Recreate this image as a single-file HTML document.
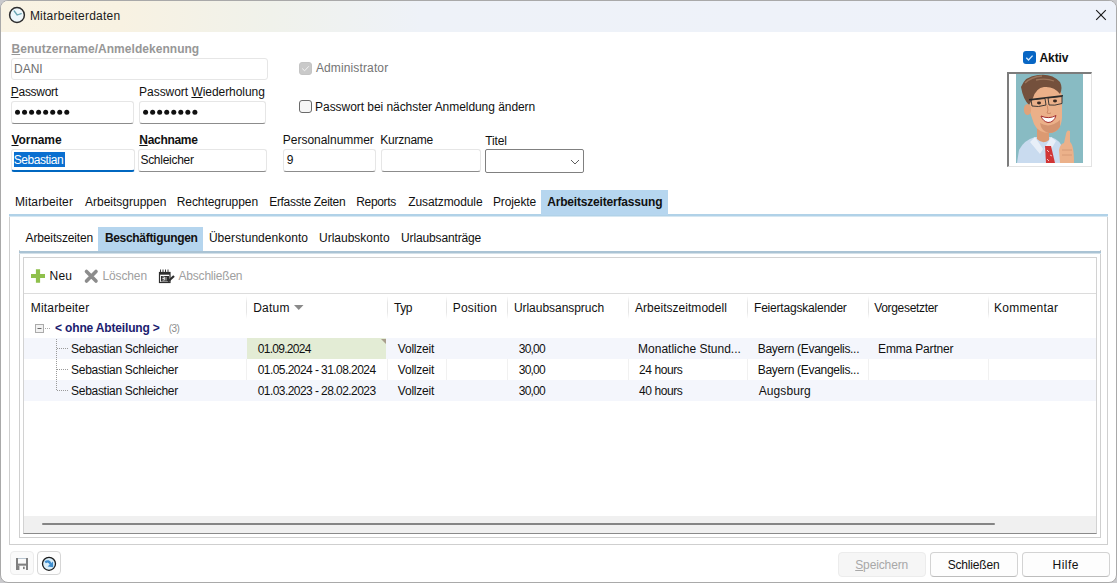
<!DOCTYPE html>
<html><head><meta charset="utf-8">
<style>
*{box-sizing:border-box;margin:0;padding:0}
html,body{width:1117px;height:583px;overflow:hidden;background:#fff}
body{font-family:"Liberation Sans",sans-serif;font-size:12px;color:#1a1a1a;position:relative}
.a{position:absolute;white-space:pre;line-height:1;z-index:5}
.a u{text-decoration:underline;text-underline-offset:1px;text-decoration-thickness:1px}
.r{position:absolute}
svg{position:absolute;overflow:visible}
</style></head><body>
<!-- window frame -->
<div class="r" style="left:0;top:0;width:1117px;height:583px;background:#c9c9cc"></div>
<div class="r" style="left:0;top:0;width:1117px;height:583px;background:#fff;border:1px solid #a9a9a9;border-radius:8px;overflow:hidden">
  <div class="r" style="left:0;top:0;width:1117px;height:31px;background:linear-gradient(90deg,#f9f3e3 0px,#f8f2e2 120px,#f0f2eb 270px,#eef2f8 420px,#eef2fa 1117px)"></div>
</div>
<!-- clock icon -->
<svg style="left:0;top:0" width="40" height="31">
  <circle cx="17" cy="15" r="7.4" fill="#eef7fb" stroke="#2d2d2d" stroke-width="1.5"/>
  <path d="M14.2 11 L17.2 15 L21.2 13.6" fill="none" stroke="#6aa6b4" stroke-width="1.3" stroke-linecap="round" stroke-linejoin="round"/>
</svg>
<!-- close -->
<svg style="left:0;top:0" width="1117" height="31">
  <path d="M1096.2 10.2 L1105.8 19.8 M1105.8 10.2 L1096.2 19.8" stroke="#1a1a1a" stroke-width="1.15"/>
</svg>

<!-- DANI box (disabled) -->
<div class="r" style="left:11px;top:58px;width:257px;height:22px;border:1px solid #e6e6e6;border-radius:3px;background:#fff"></div>
<!-- password boxes -->
<div class="r" style="left:11px;top:101px;width:123px;height:23px;border:1px solid #e6e6e6;border-bottom-color:#8c8c8c;border-radius:3px;background:#fff"></div>
<div class="r" style="left:139px;top:101px;width:127px;height:23px;border:1px solid #e6e6e6;border-bottom-color:#8c8c8c;border-radius:3px;background:#fff"></div>
<svg style="left:0;top:0" width="300" height="130"><circle cx="17.50" cy="112.3" r="2.5" fill="#111"/><circle cx="24.54" cy="112.3" r="2.5" fill="#111"/><circle cx="31.58" cy="112.3" r="2.5" fill="#111"/><circle cx="38.62" cy="112.3" r="2.5" fill="#111"/><circle cx="45.66" cy="112.3" r="2.5" fill="#111"/><circle cx="52.70" cy="112.3" r="2.5" fill="#111"/><circle cx="59.74" cy="112.3" r="2.5" fill="#111"/><circle cx="66.78" cy="112.3" r="2.5" fill="#111"/><circle cx="145.60" cy="112.3" r="2.5" fill="#111"/><circle cx="152.64" cy="112.3" r="2.5" fill="#111"/><circle cx="159.68" cy="112.3" r="2.5" fill="#111"/><circle cx="166.72" cy="112.3" r="2.5" fill="#111"/><circle cx="173.76" cy="112.3" r="2.5" fill="#111"/><circle cx="180.80" cy="112.3" r="2.5" fill="#111"/><circle cx="187.84" cy="112.3" r="2.5" fill="#111"/><circle cx="194.88" cy="112.3" r="2.5" fill="#111"/></svg>
<!-- Vorname -->
<div class="r" style="left:11px;top:149px;width:124px;height:23px;border:1px solid #e6e6e6;border-bottom:2px solid #0067c0;border-radius:3px;background:#fff"></div>
<div class="r" style="left:14px;top:152px;width:51px;height:15px;background:#0a6fd0"></div>
<div class="r" style="left:138px;top:149px;width:129px;height:23px;border:1px solid #e6e6e6;border-bottom-color:#8c8c8c;border-radius:3px;background:#fff"></div>
<!-- Personalnummer, Kurzname -->
<div class="r" style="left:283px;top:149px;width:93px;height:23px;border:1px solid #e6e6e6;border-bottom-color:#8c8c8c;border-radius:3px;background:#fff"></div>
<div class="r" style="left:381px;top:149px;width:100px;height:23px;border:1px solid #e6e6e6;border-bottom-color:#8c8c8c;border-radius:3px;background:#fff"></div>
<!-- Titel combo -->
<div class="r" style="left:485px;top:149px;width:99px;height:24px;border:1px solid #808080;border-radius:2px;background:#fff"></div>
<svg style="left:0;top:0" width="600" height="180">
  <path d="M571 160 L575 164 L579 160" fill="none" stroke="#555" stroke-width="0.95"/>
</svg>
<!-- checkboxes -->
<div class="r" style="left:299px;top:62px;width:13px;height:13px;border-radius:3px;background:#c9c9c9;border:1px solid #c4c4c4"></div>
<svg style="left:0;top:0" width="600" height="180">
  <path d="M302.2 68.5 L304.6 70.8 L308.8 66.3" fill="none" stroke="#f4f4f4" stroke-width="1"/>
</svg>
<div class="r" style="left:299px;top:100px;width:13px;height:13px;border-radius:3px;background:#f6f6f6;border:1px solid #6a6a6a"></div>
<div class="r" style="left:1023px;top:51px;width:13px;height:13px;border-radius:3px;background:#0866c4"></div>
<svg style="left:0;top:0" width="1117" height="180">
  <path d="M1026.3 57.8 L1028.5 60 L1032.6 55.6" fill="none" stroke="#d8ecff" stroke-width="1.3"/>
</svg>
<!-- photo -->
<div class="r" style="left:1007px;top:72px;width:85px;height:95px;background:#fff;border-top:2px solid #7c7c7c;border-left:2px solid #7c7c7c;border-right:1px solid #e3e3e3;border-bottom:1px solid #e3e3e3"></div>
<svg style="left:1016px;top:74px" width="67" height="89" viewBox="0 0 67 89">
  <rect x="0" y="0" width="67" height="89" fill="#88bbc3"/>
  <path d="M1 89 L3 76 Q8 66 19 63 L35 63 Q45 66 47 76 L48 89 Z" fill="#c9dbef"/>
  <path d="M19 63 L27 75 L24 80 L14 68 Z M35 63 L28 75 L33 79 L40 67 Z" fill="#e8eff8"/>
  <path d="M21 52 L33 54 L33 66 Q27 71 21 65 Z" fill="#dc9a72"/>
  <path d="M29 72 L35 72 L39 89 L30 89 Z" fill="#d13535"/>
  <path d="M31 76 l2 2 M34 81 l2 1 M31 85 l2 2" stroke="#f2c2c2" stroke-width="1"/>
  <path d="M13 22 Q14 10 28 9 Q44 8 46 22 L46 44 Q45 58 34 59 Q22 59 18 50 L14 38 Z" fill="#ebb089"/>
  <path d="M24 49 Q34 55 44 46 L44 53 Q40 59 33 59 Q25 57 24 49 Z" fill="#d49470"/>
  <path d="M5 13 Q9 2 22 1 Q36 -1 44 8 Q47 14 44 20 Q38 12 28 13 Q20 14 17 24 L13 31 Q7 25 5 13 Z" fill="#74503c"/>
  <path d="M9 9 Q15 3 26 2 M20 6 Q30 4 38 7" fill="none" stroke="#9c765c" stroke-width="1.3"/>
  <ellipse cx="11.5" cy="35.5" rx="3.6" ry="5.6" fill="#e0a27a"/>
  <ellipse cx="23" cy="29" rx="2" ry="1.4" fill="#3b2a22"/>
  <ellipse cx="39" cy="27" rx="2" ry="1.4" fill="#3b2a22"/>
  <path d="M15 26 L29 24.5 L30 31 Q22 33.5 16 32 Z M32 24 L46 22.5 L46 29.5 Q38 32 33 31 Z" fill="none" stroke="#2d2d2d" stroke-width="0.9"/>
  <path d="M13 25.8 L47 21.8" stroke="#2a2a2a" stroke-width="1.6"/>
  <path d="M31 31 Q33 37 31 39 Q33 40 35 39" fill="none" stroke="#c98662" stroke-width="0.9"/>
  <path d="M25 42 Q33 45.5 40 41.5 Q38 48.5 32 48.5 Q27 47.5 25 42 Z" fill="#fff" stroke="#a43030" stroke-width="1"/>
  <path d="M44 89 L43 76 Q44 70 48 69 L50 60 Q51 55 54 57 L54 68 Q58 71 58 89 Z" fill="#ebb18a"/>
  <path d="M46 76 H56 M46 81 H56" stroke="#d09472" stroke-width="0.8"/>
</svg>

<!-- outer tab panel -->
<div class="r" style="left:9px;top:214px;width:1099px;height:331px;border:1px solid #cfcfcf;border-top:0;background:#fff"></div>
<div class="r" style="left:9px;top:214px;width:1099px;height:2px;background:#b1d2e8"></div><div class="r" style="left:9px;top:216px;width:1099px;height:1px;background:#d6e7f2"></div>
<div class="r" style="left:541px;top:190px;width:127px;height:25px;background:#b6d6ef"></div>
<!-- inner tab panel -->
<div class="r" style="left:19px;top:250px;width:1082px;height:288px;border:1px solid #cfcfcf;border-top:0;background:#fff"></div>
<div class="r" style="left:19px;top:251px;width:1082px;height:2px;background:#aac3d4"></div><div class="r" style="left:19px;top:253px;width:1082px;height:1px;background:#d3e0e8"></div>
<div class="r" style="left:98px;top:227px;width:105px;height:24px;background:#b5d5ee"></div>
<!-- grid -->
<div class="r" style="left:23px;top:257px;width:1074px;height:277px;border:1px solid #d2d2d2;border-bottom-color:#8a8a8a;background:#fff"></div>
<div class="r" style="left:24px;top:293px;width:1072px;height:1px;background:#dcdcdc"></div>
<!-- toolbar icons -->
<svg style="left:0;top:0" width="300" height="300">
  <path d="M38 269.2 V282.8 M31 276 H45" stroke="#8fc04c" stroke-width="4.2"/>
  <path d="M86.5 271.5 L96 281 M96 271.5 L86.5 281" stroke="#8c8c8c" stroke-width="3.6" stroke-linecap="round"/>
  <path d="M160.5 269.5 v3 M163 269.5 v3 M165.5 269.5 v3 M168 269.5 v3" stroke="#3a3a3a" stroke-width="1"/>
  <rect x="159.5" y="272.5" width="10.5" height="10" fill="#fff" stroke="#2e2e2e" stroke-width="1.2"/>
  <rect x="159.5" y="272.5" width="10.5" height="2.2" fill="#2e2e2e"/>
  <rect x="161" y="276" width="8" height="5.5" fill="#2e2e2e"/>
  <path d="M162.5 277 h2 v1.6 h-2 M162.5 278.6 h2 v1.6 h-2 M166 277 v3.6" fill="none" stroke="#fff" stroke-width="0.7"/>
  <path d="M168 281.5 L174 276" stroke="#2e2e2e" stroke-width="2.2"/>
</svg>
<!-- header separators -->
<div class="r" style="left:246px;top:296px;width:1px;height:23px;background:linear-gradient(#fff,#e6e6e6 30%,#e6e6e6 70%,#fff)"></div><div class="r" style="left:387px;top:296px;width:1px;height:23px;background:linear-gradient(#fff,#e6e6e6 30%,#e6e6e6 70%,#fff)"></div><div class="r" style="left:446px;top:296px;width:1px;height:23px;background:linear-gradient(#fff,#e6e6e6 30%,#e6e6e6 70%,#fff)"></div><div class="r" style="left:507px;top:296px;width:1px;height:23px;background:linear-gradient(#fff,#e6e6e6 30%,#e6e6e6 70%,#fff)"></div><div class="r" style="left:628px;top:296px;width:1px;height:23px;background:linear-gradient(#fff,#e6e6e6 30%,#e6e6e6 70%,#fff)"></div><div class="r" style="left:747px;top:296px;width:1px;height:23px;background:linear-gradient(#fff,#e6e6e6 30%,#e6e6e6 70%,#fff)"></div><div class="r" style="left:868px;top:296px;width:1px;height:23px;background:linear-gradient(#fff,#e6e6e6 30%,#e6e6e6 70%,#fff)"></div><div class="r" style="left:988px;top:296px;width:1px;height:23px;background:linear-gradient(#fff,#e6e6e6 30%,#e6e6e6 70%,#fff)"></div><div class="r" style="left:246px;top:359px;width:1px;height:21px;background:#f1f1f1"></div><div class="r" style="left:387px;top:359px;width:1px;height:21px;background:#f1f1f1"></div><div class="r" style="left:446px;top:359px;width:1px;height:21px;background:#f1f1f1"></div><div class="r" style="left:507px;top:359px;width:1px;height:21px;background:#f1f1f1"></div><div class="r" style="left:628px;top:359px;width:1px;height:21px;background:#f1f1f1"></div><div class="r" style="left:747px;top:359px;width:1px;height:21px;background:#f1f1f1"></div><div class="r" style="left:868px;top:359px;width:1px;height:21px;background:#f1f1f1"></div><div class="r" style="left:988px;top:359px;width:1px;height:21px;background:#f1f1f1"></div>
<!-- rows -->
<div class="r" style="left:24px;top:338px;width:1072px;height:21px;background:#f4f6fc"></div>
<div class="r" style="left:24px;top:380px;width:1072px;height:21px;background:#f4f6fc"></div>
<div class="r" style="left:247px;top:338px;width:139px;height:21px;background:#e3ecd5"></div>
<svg style="left:0;top:0" width="400" height="400">
  <path d="M381 339 L386 339 L386 344 Z" fill="#a89e8c"/>
  <rect x="35.5" y="324.5" width="8" height="8" fill="#f2f2f2" stroke="#ababab" stroke-width="1"/>
  <path d="M37.5 328.5 H41.5" stroke="#6a6a6a" stroke-width="1"/>
  <path d="M45 328.5 H50" stroke="#aaa" stroke-width="1" stroke-dasharray="1 1"/>
  <path d="M56.5 339 V390" stroke="#9a9a9a" stroke-width="1" stroke-dasharray="1 1"/>
  <path d="M57 348.5 H68 M57 369.5 H68 M57 390.5 H68" stroke="#9a9a9a" stroke-width="1" stroke-dasharray="1 1"/>
  <path d="M294 305 L303.5 305 L298.75 310 Z" fill="#8a8a8a"/>
</svg>
<!-- scrollbar -->
<div class="r" style="left:24px;top:516px;width:1072px;height:17px;background:#f0f0f0"></div>
<div class="r" style="left:42px;top:522.7px;width:953px;height:2.5px;background:#858585;border-radius:2px"></div>

<!-- bottom buttons -->
<div class="r" style="left:10px;top:551px;width:24px;height:24px;border:1px solid #ececec;border-radius:4px;background:#fafafa"></div>
<div class="r" style="left:37px;top:551px;width:24px;height:24px;border:1px solid #d6d6d6;border-radius:4px;background:#fdfdfd"></div>
<svg style="left:0;top:0" width="100" height="583">
  <rect x="16" y="558" width="2" height="12" fill="#808080"/>
  <rect x="26" y="558" width="2" height="12" fill="#808080"/>
  <rect x="16" y="563.6" width="12" height="2.1" fill="#808080"/>
  <rect x="16" y="565.7" width="3.4" height="4.3" fill="#808080"/>
  <rect x="23" y="566.7" width="1.7" height="2.4" fill="#808080"/>
  <rect x="18" y="558" width="8" height="1" fill="#b8c4cf"/>
  <circle cx="49" cy="563.8" r="6.5" fill="#d9eefa" stroke="#1b1b1b" stroke-width="1.3"/>
  <path d="M45.2 562.4 Q48.6 559.8 50.6 564" fill="none" stroke="#3d8dcf" stroke-width="2.4"/>
  <path d="M53.2 567.2 L47.6 566.6 L53 561.6 Z" fill="#3d8dcf"/>
</svg>
<div class="r" style="left:838px;top:552px;width:88px;height:25px;border:1px solid #ececec;border-radius:4px;background:#f6f6f6"></div>
<div class="r" style="left:930px;top:552px;width:88px;height:25px;border:1px solid #d3d3d3;border-bottom-color:#bdbdbd;border-radius:4px;background:#fdfdfd"></div>
<div class="r" style="left:1022px;top:552px;width:88px;height:25px;border:1px solid #d3d3d3;border-bottom-color:#bdbdbd;border-radius:4px;background:#fdfdfd"></div>

<div class="a" style="left:29.90px;top:10px;font-weight:400;color:#1b1b1b;font-size:12px;letter-spacing:0.233px">Mitarbeiterdaten</div>
<div class="a" style="left:11.50px;top:43px;font-weight:700;color:#979797;font-size:12px;letter-spacing:0.038px"><u>B</u>enutzername/Anmeldekennung</div>
<div class="a" style="left:14.00px;top:63px;font-weight:400;color:#6e6e6e;font-size:12px;letter-spacing:0.000px">DANI</div>
<div class="a" style="left:10.80px;top:86px;font-weight:400;color:#111111;font-size:12px;letter-spacing:-0.300px"><u>P</u>asswort</div>
<div class="a" style="left:139.10px;top:86px;font-weight:400;color:#111111;font-size:12px;letter-spacing:-0.045px">Passwort <u>W</u>iederholung</div>
<div class="a" style="left:11.50px;top:134px;font-weight:700;color:#111111;font-size:12px;letter-spacing:-0.067px"><u>V</u>orname</div>
<div class="a" style="left:139.30px;top:134px;font-weight:700;color:#111111;font-size:12px;letter-spacing:-0.300px"><u>N</u>achname</div>
<div class="a" style="left:13.80px;top:154px;font-weight:400;color:#ffffff;font-size:12px;letter-spacing:-0.450px">Sebastian</div>
<div class="a" style="left:140.40px;top:154px;font-weight:400;color:#111111;font-size:12px;letter-spacing:-0.267px">Schleicher</div>
<div class="a" style="left:315.90px;top:62px;font-weight:400;color:#747474;font-size:12px;letter-spacing:0.133px">Administrator</div>
<div class="a" style="left:315.10px;top:101px;font-weight:400;color:#111111;font-size:12px;letter-spacing:-0.054px">Passwort bei nächster Anmeldung ändern</div>
<div class="a" style="left:282.80px;top:134px;font-weight:400;color:#111111;font-size:12px;letter-spacing:-0.023px">Personalnummer</div>
<div class="a" style="left:380.30px;top:134px;font-weight:400;color:#111111;font-size:12px;letter-spacing:-0.243px">Kurzname</div>
<div class="a" style="left:485.30px;top:135px;font-weight:400;color:#111111;font-size:12px;letter-spacing:-0.125px">Titel</div>
<div class="a" style="left:286.70px;top:154px;font-weight:400;color:#111111;font-size:12px;letter-spacing:0.000px">9</div>
<div class="a" style="left:1039.60px;top:52px;font-weight:700;color:#111;font-size:12px;letter-spacing:-0.150px">Aktiv</div>
<div class="a" style="left:15.00px;top:196px;font-weight:400;color:#111111;font-size:12px;letter-spacing:0.120px">Mitarbeiter</div>
<div class="a" style="left:85.00px;top:196px;font-weight:400;color:#111111;font-size:12px;letter-spacing:0.000px">Arbeitsgruppen</div>
<div class="a" style="left:176.70px;top:196px;font-weight:400;color:#111111;font-size:12px;letter-spacing:-0.058px">Rechtegruppen</div>
<div class="a" style="left:269.20px;top:196px;font-weight:400;color:#111111;font-size:12px;letter-spacing:-0.307px">Erfasste Zeiten</div>
<div class="a" style="left:356.20px;top:196px;font-weight:400;color:#111111;font-size:12px;letter-spacing:-0.317px">Reports</div>
<div class="a" style="left:408.30px;top:196px;font-weight:400;color:#111111;font-size:12px;letter-spacing:-0.100px">Zusatzmodule</div>
<div class="a" style="left:492.90px;top:196px;font-weight:400;color:#111111;font-size:12px;letter-spacing:-0.100px">Projekte</div>
<div class="a" style="left:547.20px;top:196px;font-weight:700;color:#111;font-size:12px;letter-spacing:-0.179px">Arbeitszeiterfassung</div>
<div class="a" style="left:25.60px;top:232px;font-weight:400;color:#111111;font-size:12px;letter-spacing:-0.142px">Arbeitszeiten</div>
<div class="a" style="left:208.90px;top:232px;font-weight:400;color:#111111;font-size:12px;letter-spacing:0.067px">Überstundenkonto</div>
<div class="a" style="left:319.00px;top:232px;font-weight:400;color:#111111;font-size:12px;letter-spacing:-0.009px">Urlaubskonto</div>
<div class="a" style="left:401.00px;top:232px;font-weight:400;color:#111111;font-size:12px;letter-spacing:-0.138px">Urlaubsanträge</div>
<div class="a" style="left:104.90px;top:232px;font-weight:700;color:#111;font-size:12px;letter-spacing:-0.307px">Beschäftigungen</div>
<div class="a" style="left:49.50px;top:270px;font-weight:400;color:#111111;font-size:12px;letter-spacing:0.250px">Neu</div>
<div class="a" style="left:102.40px;top:270px;font-weight:400;color:#a0a0a0;font-size:12px;letter-spacing:-0.117px">Löschen</div>
<div class="a" style="left:178.50px;top:270px;font-weight:400;color:#a0a0a0;font-size:12px;letter-spacing:-0.200px">Abschließen</div>
<div class="a" style="left:30.80px;top:302px;font-weight:400;color:#111111;font-size:12px;letter-spacing:0.170px">Mitarbeiter</div>
<div class="a" style="left:253.20px;top:302px;font-weight:400;color:#111111;font-size:12px;letter-spacing:0.225px">Datum</div>
<div class="a" style="left:394.10px;top:302px;font-weight:400;color:#111111;font-size:12px;letter-spacing:-0.500px">Typ</div>
<div class="a" style="left:452.70px;top:302px;font-weight:400;color:#111111;font-size:12px;letter-spacing:0.214px">Position</div>
<div class="a" style="left:513.90px;top:302px;font-weight:400;color:#111111;font-size:12px;letter-spacing:-0.036px">Urlaubsanspruch</div>
<div class="a" style="left:635.00px;top:302px;font-weight:400;color:#111111;font-size:12px;letter-spacing:0.031px">Arbeitszeitmodell</div>
<div class="a" style="left:754.00px;top:302px;font-weight:400;color:#111111;font-size:12px;letter-spacing:-0.200px">Feiertagskalender</div>
<div class="a" style="left:874.20px;top:302px;font-weight:400;color:#111111;font-size:12px;letter-spacing:-0.318px">Vorgesetzter</div>
<div class="a" style="left:994.10px;top:302px;font-weight:400;color:#111111;font-size:12px;letter-spacing:0.225px">Kommentar</div>
<div class="a" style="left:55.10px;top:322px;font-weight:700;color:#1b206e;font-size:12px;letter-spacing:-0.165px">&lt; ohne Abteilung &gt;</div>
<div class="a" style="left:168.80px;top:324px;font-weight:400;color:#8c8c8c;font-size:10px;letter-spacing:-0.650px">(3)</div>
<div class="a" style="left:71.10px;top:343px;font-weight:400;color:#111111;font-size:12px;letter-spacing:-0.300px">Sebastian Schleicher</div>
<div class="a" style="left:257.70px;top:343px;font-weight:400;color:#111111;font-size:12px;letter-spacing:-0.700px">01.09.2024</div>
<div class="a" style="left:397.80px;top:343px;font-weight:400;color:#111111;font-size:12px;letter-spacing:-0.214px">Vollzeit</div>
<div class="a" style="left:518.80px;top:343px;font-weight:400;color:#111111;font-size:12px;letter-spacing:-0.800px">30,00</div>
<div class="a" style="left:638.10px;top:343px;font-weight:400;color:#111111;font-size:12px;letter-spacing:0.000px">Monatliche Stund...</div>
<div class="a" style="left:757.80px;top:343px;font-weight:400;color:#111111;font-size:12px;letter-spacing:-0.300px">Bayern (Evangelis...</div>
<div class="a" style="left:71.10px;top:364px;font-weight:400;color:#111111;font-size:12px;letter-spacing:-0.300px">Sebastian Schleicher</div>
<div class="a" style="left:257.70px;top:364px;font-weight:400;color:#111111;font-size:12px;letter-spacing:-0.564px">01.05.2024 - 31.08.2024</div>
<div class="a" style="left:397.80px;top:364px;font-weight:400;color:#111111;font-size:12px;letter-spacing:-0.214px">Vollzeit</div>
<div class="a" style="left:518.80px;top:364px;font-weight:400;color:#111111;font-size:12px;letter-spacing:-0.800px">30,00</div>
<div class="a" style="left:639.10px;top:364px;font-weight:400;color:#111111;font-size:12px;letter-spacing:-0.429px">24 hours</div>
<div class="a" style="left:757.80px;top:364px;font-weight:400;color:#111111;font-size:12px;letter-spacing:-0.300px">Bayern (Evangelis...</div>
<div class="a" style="left:71.10px;top:385px;font-weight:400;color:#111111;font-size:12px;letter-spacing:-0.300px">Sebastian Schleicher</div>
<div class="a" style="left:257.70px;top:385px;font-weight:400;color:#111111;font-size:12px;letter-spacing:-0.564px">01.03.2023 - 28.02.2023</div>
<div class="a" style="left:397.80px;top:385px;font-weight:400;color:#111111;font-size:12px;letter-spacing:-0.214px">Vollzeit</div>
<div class="a" style="left:518.80px;top:385px;font-weight:400;color:#111111;font-size:12px;letter-spacing:-0.800px">30,00</div>
<div class="a" style="left:639.10px;top:385px;font-weight:400;color:#111111;font-size:12px;letter-spacing:-0.429px">40 hours</div>
<div class="a" style="left:758.80px;top:385px;font-weight:400;color:#111111;font-size:12px;letter-spacing:0.071px">Augsburg</div>
<div class="a" style="left:878.10px;top:343px;font-weight:400;color:#111111;font-size:12px;letter-spacing:-0.173px">Emma Partner</div>
<div class="a" style="left:855.20px;top:559px;font-weight:400;color:#a8a8a8;font-size:12px;letter-spacing:-0.125px"><u>S</u>peichern</div>
<div class="a" style="left:947.70px;top:559px;font-weight:400;color:#111111;font-size:12px;letter-spacing:-0.175px">Schließen</div>
<div class="a" style="left:1052.50px;top:559px;font-weight:400;color:#111111;font-size:12px;letter-spacing:0.500px">Hilfe</div>
</body></html>
